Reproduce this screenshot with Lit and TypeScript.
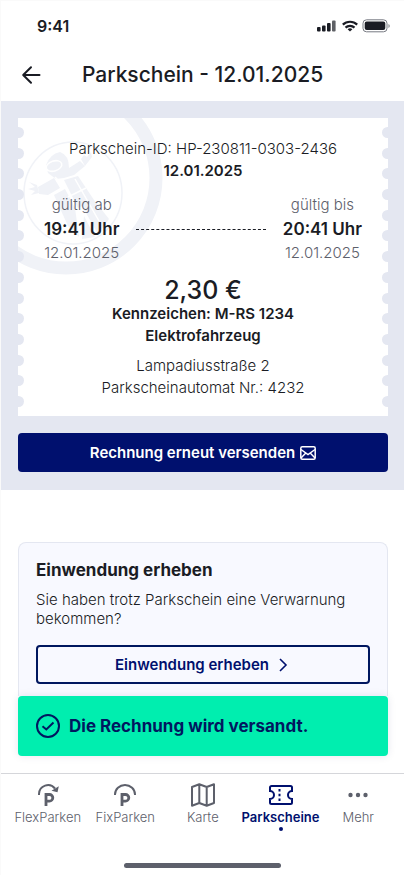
import { LitElement, html, css, svg } from "lit";
import { customElement } from "lit/decorators.js";

const notches = Array.from({ length: 14 });

const tabs = [
  {
    label: "FlexParken",
    icon: svg`<path d="M3 12V11A9 9 0 0 1 19 5.500" fill="none" stroke="currentColor" stroke-width="2"/><path d="M22.800 3.200 21.500 9.300 15.500 7.800Z" fill="currentColor"/><path d="M10 23V11.500H13.500a3.300 3.300 0 0 1 0 6.600H10" fill="none" stroke="currentColor" stroke-width="2.800"/>`,
  },
  {
    label: "FixParken",
    icon: svg`<path d="M2 12V11.500A10 9.500 0 0 1 22 11.500V12" fill="none" stroke="currentColor" stroke-width="2"/><path d="M9 23V11.500H12.500a3.300 3.300 0 0 1 0 6.600H9" fill="none" stroke="currentColor" stroke-width="2.800"/>`,
  },
  {
    label: "Karte",
    icon: svg`<path d="M1 4 8.300 1.300 15.700 4 23 1.300V20L15.700 22.700 8.300 20 1 22.700ZM8.300 1.300V20M15.700 4V22.700" fill="none" stroke="currentColor" stroke-width="2" stroke-linejoin="round"/>`,
  },
  {
    label: "Parkscheine",
    active: true,
    icon: svg`<path d="M2.500 3H21.500A1.500 1.500 0 0 1 23 4.500V8A4 4 0 0 0 23 16V19.500A1.500 1.500 0 0 1 21.500 21H2.500A1.500 1.500 0 0 1 1 19.500V16A4 4 0 0 0 1 8V4.500A1.500 1.500 0 0 1 2.500 3Z" fill="none" stroke="currentColor" stroke-width="2"/><path d="M10.500 6v12" fill="none" stroke="currentColor" stroke-width="2" stroke-dasharray="2.400 2.400"/>`,
  },
  {
    label: "Mehr",
    icon: svg`<g fill="currentColor"><circle cx="4.500" cy="12" r="2.200"/><circle cx="12" cy="12" r="2.200"/><circle cx="19.500" cy="12" r="2.200"/></g>`,
  },
];

@customElement("app-root")
export class AppRoot extends LitElement {
  static styles = css`
    :host {
      display: flex;
      flex-direction: column;
      min-height: 100vh;
      box-sizing: border-box;
      border-top: 1px solid #fafafa;
      border-left: 1px solid #fafafa;
      background: #fff;
      color: #1a1c24;
      font-family: Inter, "Liberation Sans", sans-serif;
      font-size: 15px;
      line-height: 22px;
      font-weight: 300;
    }
    * { box-sizing: border-box; }
    svg { display: block; flex: none; }
    h1, h2, p { margin: 0; }
    button { font: inherit; cursor: pointer; }
    .status {
      display: flex;
      align-items: center;
      justify-content: space-between;
      height: 50px;
      padding: 0 14px 0 36px;
    }
    .time { font-size: 16px; font-weight: 600; }
    .header {
      display: grid;
      grid-template-columns: 60px 1fr 60px;
      align-items: center;
      height: 50px;
      padding-bottom: 2px;
    }
    .back { border: 0; background: none; padding: 0 0 0 20px; color: inherit; }
    .title { font-size: 21px; line-height: 28px; font-weight: 500; text-align: center; white-space: nowrap; }
    .hero { background: #e4e7f1; padding: 17px 16px 18px 17px; }
    .ticket {
      position: relative;
      display: flex;
      overflow: hidden;
      background: #fff;
    }
    .crest { position: absolute; left: 0; top: 0; }
    .edge {
      position: relative;
      display: flex;
      flex-direction: column;
      justify-content: space-between;
      width: 6px;
      padding: 9px 0;
      overflow: hidden;
    }
    .edge.left { align-items: flex-end; }
    .notch { flex: none; width: 11px; height: 11px; border-radius: 50%; background: #e4e7f1; }
    .body { position: relative; flex: 1; padding: 20px 20px 17px; text-align: center; }
    .strong { font-weight: 600; }
    .span {
      display: grid;
      grid-template-columns: auto 1fr auto;
      align-items: center;
      column-gap: 17px;
      padding-top: 11px;
    }
    .when { color: #5d606b; line-height: 24px; }
    .clock { font-size: 17px; font-weight: 600; color: #1a1c24; }
    .dash { border-top: 1px dashed #1a1c24; }
    .price { font-size: 25px; line-height: 26px; font-weight: 500; padding-top: 12px; }
    .place { padding-top: 8px; }
    .primary {
      display: flex;
      align-items: center;
      justify-content: center;
      gap: 5px;
      width: 100%;
      height: 39px;
      margin-top: 17px;
      border: 0;
      border-radius: 4px;
      background: #00106e;
      color: #fff;
      font-weight: 600;
    }
    .lower { display: flex; flex-direction: column; flex: 1; padding: 52px 16px 17px 17px; }
    .card {
      flex: 1;
      padding: 15px 17px 12px;
      border: 1px solid #e4e7f1;
      border-bottom: 0;
      border-radius: 8px 8px 0 0;
      background: #f8f9ff;
    }
    .heading { font-size: 17px; line-height: 24px; font-weight: 700; }
    .text { padding: 8px 0 17px; line-height: 19px; }
    .outline {
      display: flex;
      align-items: center;
      justify-content: center;
      gap: 6px;
      width: 100%;
      height: 39px;
      border: 2px solid #00175f;
      border-radius: 4px;
      background: none;
      color: #00106e;
      font-weight: 600;
    }
    .toast {
      display: flex;
      align-items: center;
      gap: 9px;
      height: 60px;
      padding: 0 18px;
      border-radius: 4px;
      background: #00eeaf;
      color: #00175f;
      font-size: 17px;
      font-weight: 700;
      box-shadow: 0 0 8px #00175f1a;
    }
    .tabs {
      display: grid;
      grid-template-columns: repeat(5, 1fr);
      padding: 9px 7px 0 8px;
      border-top: 1px solid #d5d6da;
    }
    .tab {
      display: flex;
      flex-direction: column;
      align-items: center;
      height: 54px;
      color: #5d606b;
      font-size: 13px;
      line-height: 20px;
      text-decoration: none;
    }
    .tab.active { color: #00106e; font-weight: 600; }
    .dot { width: 4px; height: 4px; border-radius: 50%; background: #00106e; }
    .home { align-self: center; width: 157px; height: 5px; margin: 26px 0 7px; border-radius: 3px; background: #5d606b; }
  `;

  render() {
    return html`
      <div class="status">
        <span class="time">9:41</span>
        <svg width="74" height="14" viewBox="0 0 74 14" aria-hidden="true">
          <g fill="#1a1c24">
            <rect x="1" y="8" width="3.600" height="4.500" rx="1"/><rect x="6" y="6.500" width="3.600" height="6" rx="1"/>
            <rect x="11" y="4" width="3.600" height="8.500" rx="1"/><rect x="16" y="1.500" width="3.600" height="11" rx="1" opacity=".7"/>
          </g>
          <g fill="none" stroke="#1a1c24" stroke-width="2.200">
            <path d="M26.800 5.600A10.500 10.500 0 0 1 41.200 5.600"/><path d="M29.500 8.600A6.500 6.500 0 0 1 38.500 8.600"/>
          </g>
          <path d="M34 12.500 31.600 10.300A3.600 3.600 0 0 1 36.400 10.300Z" fill="#1a1c24"/>
          <rect x="47" y=".8" width="24" height="12" rx="3.500" fill="none" stroke="#777a82"/>
          <rect x="48.700" y="2.500" width="20.600" height="8.600" rx="2" fill="#1a1c24"/>
          <path d="M72.500 5v4q1.200-.5 1.200-2t-1.200-2" fill="#777a82"/>
        </svg>
      </div>
      <header class="header">
        <button class="back" aria-label="Zurück">
          <svg width="20" height="20" viewBox="0 0 20 20" fill="none" stroke="currentColor" stroke-width="2" stroke-linecap="round" stroke-linejoin="round"><path d="M18.500 10H2.500M10 2.200 2.200 10 10 17.800"/></svg>
        </button>
        <h1 class="title">Parkschein - 12.01.2025</h1>
      </header>
      <section class="hero">
        <div class="ticket">
          <svg class="crest" width="150" height="160" viewBox="0 0 150 160" aria-hidden="true">
            <circle cx="48" cy="60" r="90" fill="none" stroke="#f0f2f7" stroke-width="13"/>
            <ellipse cx="55" cy="75" rx="49" ry="51" fill="none" stroke="#f0f2f7" stroke-width="1.500"/>
            <g fill="#f0f2f7">
              <path d="M28 47Q32 36 42 34Q51 37 51 50L62 43 67 48 56 57 46 60 38 61 30 55Z"/>
              <path d="M63 41 66 37 69 39 73 34 74 39 67 48Z"/>
              <path d="M36 60 42 70 30 77 21 76 20 69Z"/>
              <path d="M19 67 11 64 17 69 10 71 17 73 13 77 21 75Z"/>
              <path d="M36 77 47 71 57 90 61 119 50 108Z"/>
              <path d="M46 62 60 58 76 82 91 101 80 116 64 88 60 90Z"/>
              <path d="M66 98 77 119 64 121Z"/>
            </g>
            <g fill="none" stroke="#fff" stroke-width="1.500">
              <ellipse cx="36" cy="48" rx="8" ry="5" transform="rotate(-18 36 48)"/>
              <path d="M50 79 68 70M57 61 81 103M37 59 50 72"/>
            </g>
          </svg>
          <div class="edge left">${notches.map(() => html`<i class="notch"></i>`)}</div>
          <div class="body">
            <p>Parkschein-ID: HP-230811-0303-2436</p>
            <p class="strong">12.01.2025</p>
            <div class="span">
              <div class="when"><p>gültig ab</p><p class="clock">19:41 Uhr</p><p>12.01.2025</p></div>
              <div class="dash"></div>
              <div class="when"><p>gültig bis</p><p class="clock">20:41 Uhr</p><p>12.01.2025</p></div>
            </div>
            <p class="price">2,30 €</p>
            <p class="strong">Kennzeichen: M-RS 1234</p>
            <p class="strong">Elektrofahrzeug</p>
            <div class="place"><p>Lampadiusstraße 2</p><p>Parkscheinautomat Nr.: 4232</p></div>
          </div>
          <div class="edge">${notches.map(() => html`<i class="notch"></i>`)}</div>
        </div>
        <button class="primary">
          Rechnung erneut versenden
          <svg width="16" height="14" viewBox="0 0 16 14" fill="none" stroke="currentColor" stroke-width="1.500"><rect x=".8" y=".8" width="14.400" height="12.400" rx="1.500"/><path d="M1 3.500 8 8.500 15 3.500M1 12 5.800 7M15 12 10.200 7"/></svg>
        </button>
      </section>
      <section class="lower">
        <div class="card">
          <h2 class="heading">Einwendung erheben</h2>
          <p class="text">Sie haben trotz Parkschein eine Verwarnung bekommen?</p>
          <button class="outline">
            Einwendung erheben
            <svg width="16" height="16" viewBox="0 0 16 16" fill="none" stroke="currentColor" stroke-width="1.600"><path d="M5 2 11 8 5 14"/></svg>
          </button>
        </div>
        <div class="toast" role="status">
          <svg width="24" height="24" viewBox="0 0 24 24" fill="none" stroke="currentColor" stroke-width="2"><circle cx="12" cy="12" r="11"/><path d="M6.500 12.200 10.300 15.500 17.500 8.500"/></svg>
          Die Rechnung wird versandt.
        </div>
      </section>
      <nav class="tabs">
        ${tabs.map(
          (t) => html`<a class="tab ${t.active ? "active" : ""}" href="#">
            <svg width="24" height="24" viewBox="0 0 24 24" aria-hidden="true">${t.icon}</svg>
            <span>${t.label}</span>
            ${t.active ? html`<i class="dot"></i>` : ""}
          </a>`
        )}
      </nav>
      <div class="home"></div>
    `;
  }
}
